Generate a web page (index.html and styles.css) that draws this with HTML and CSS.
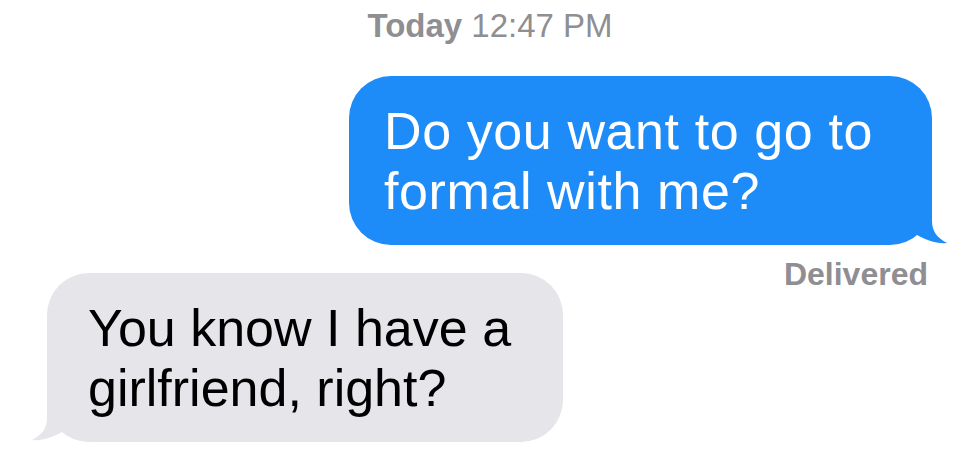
FILE: index.html
```html
<!DOCTYPE html>
<html lang="en">
<head>
    <meta charset="UTF-8">
    <meta name="viewport" content="width=device-width, initial-scale=1.0">
    <title>Messages</title>
    <link rel="stylesheet" href="styles.css">
</head>
<body>
    <div class="thread">
        <div class="stamp"><b>Today</b> 12:47 PM</div>

        <div class="bubble sent">
            Do you want to go to formal with me?
            <svg class="tail" width="58" height="46" viewBox="0 0 58 46">
                <path d="M0 0 L42 0 L42 22 C42 32 47 39 57 44 C48 45 36 42 22 33 C16 39 8 45 0 45 Z"/>
            </svg>
        </div>
        <div class="status">Delivered</div>

        <div class="bubble received">
            You know I have a girlfriend, right?
            <svg class="tail" width="58" height="46" viewBox="0 0 58 46">
                <path d="M0 0 L42 0 L42 22 C42 32 47 39 57 44 C48 45 36 42 22 33 C16 39 8 45 0 45 Z"/>
            </svg>
        </div>
    </div>
</body>
</html>
```
FILE: styles.css
```css
html, body {
    margin: 0;
    background: #fff;
}

body {
    font-family: "Liberation Sans", Arial, sans-serif;
}

.thread {
    display: flex;
    flex-direction: column;
}

.stamp {
    text-align: center;
    font-size: 33px;
    line-height: 40px;
    padding-top: 6px;
    color: #8e8e93;
}

.stamp b {
    font-weight: bold;
}

.bubble {
    position: relative;
    font-size: 52px;
    line-height: 60px;
    padding: 25px 0 24px;
    border-radius: 42px;
    box-sizing: border-box;
}

.bubble .tail {
    position: absolute;
    bottom: 0;
}

.sent {
    align-self: flex-end;
    width: 583px;
    margin: 30px 48px 0 0;
    padding-left: 35px;
    background: #1d8cf8;
    color: #fff;
    letter-spacing: 0.6px;
}

.sent .tail {
    right: -16px;
    fill: #1d8cf8;
}

.status {
    align-self: flex-end;
    margin: 15px 52px 0 0;
    font-size: 32px;
    line-height: 28px;
    font-weight: bold;
    color: #8e8e93;
}

.received {
    align-self: flex-start;
    width: 516px;
    margin: -15px 0 0 47px;
    padding-left: 41px;
    background: #e5e5ea;
    color: #000;
}

.received .tail {
    left: -16px;
    fill: #e5e5ea;
    transform: scaleX(-1);
}
```
